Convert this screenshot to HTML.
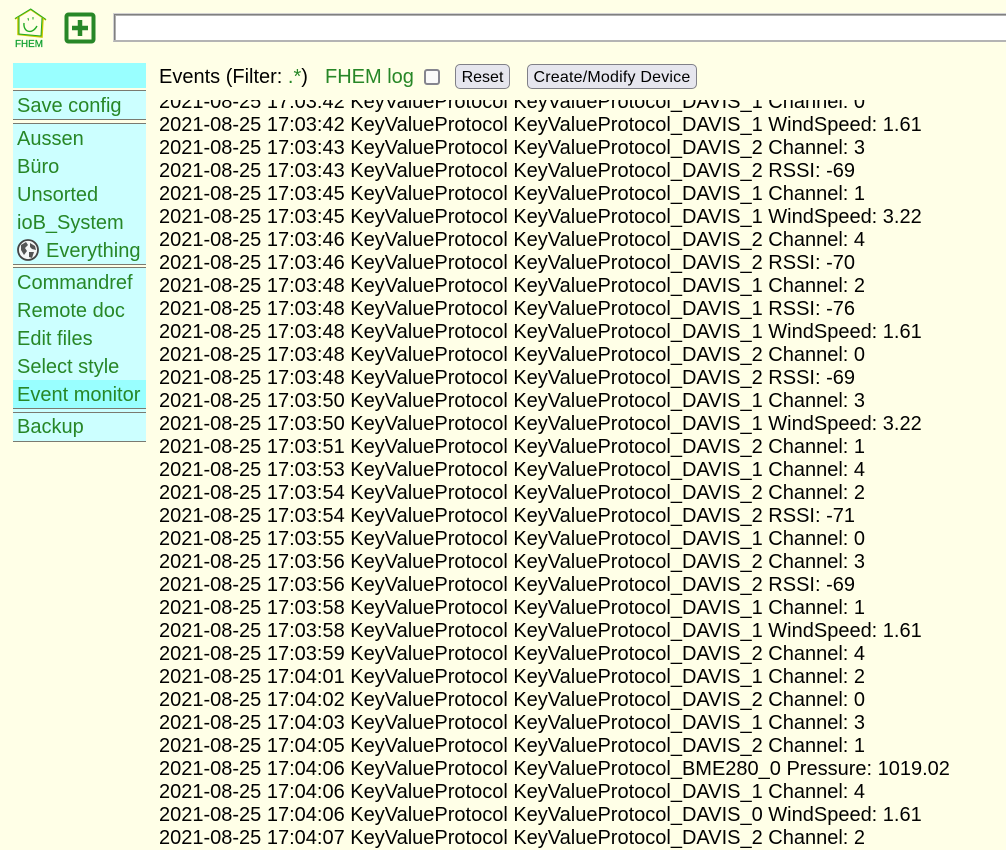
<!DOCTYPE html>
<html><head><meta charset="utf-8"><style>
html,body{margin:0;padding:0;width:1006px;height:850px;overflow:hidden;background:#FFFFE7;font-family:"Liberation Sans",sans-serif;font-size:20px;color:#000}
.a{position:absolute}
#q{left:113px;top:13px;width:900px;height:29px;box-sizing:border-box;background:#fff;border:1px solid #d2d2d2;border-bottom:2px solid #b4b4b4;box-shadow:inset 1px 1px 0 #808080,inset 2px 2px 0 #b0b0b0}
.m{position:absolute;left:13px;width:133px;background:#CCFFFF;color:#278727;white-space:nowrap;overflow:hidden}
.r{position:absolute;left:4px;line-height:23px;height:23px}
.hr{position:absolute;left:13px;width:133px;height:1px;background:#7a7a70}
.hl{position:absolute;left:13px;width:133px;height:28px;background:#99FFFF}
.btn{position:absolute;top:64px;height:25px;box-sizing:border-box;border:1px solid #808088;border-radius:5px;background:#E6E6EE;font-size:16px;line-height:25px;text-align:center;color:#000;white-space:nowrap}
#log{left:159px;top:100px;width:840px;height:750px;overflow:hidden;line-height:23px;white-space:nowrap}
#log div{height:23px;margin:0}
#log #in{margin-top:-9px;height:auto}
</style></head><body>
<svg class="a" style="left:13px;top:8px" width="36" height="42" viewBox="0 0 36 42">
<path d="M2 11 L17.700 1.500 L33 12" fill="none" stroke="#c8c800" stroke-width="1.500"/>
<path d="M2 10.500 L17.700 1 L33 11.500" fill="none" stroke="#22aa22" stroke-width="1"/>
<path d="M5 9 L5 26.500 L29 29 L30 10" fill="none" stroke="#c8c800" stroke-width="1.500"/>
<path d="M6 9 L6 26 L28 28 L29 10" fill="none" stroke="#22aa22" stroke-width="1"/>
<path d="M11 15 C10 24 19 27 24 18" fill="none" stroke="#22aa22" stroke-width="1.400"/>
<path d="M15 10 L15.500 12.500 M20 9 L20 11.500" stroke="#22aa22" stroke-width="1"/>
<text x="2" y="39" font-family="Liberation Sans" font-size="10.500" fill="#10a030" stroke="#10a030" stroke-width=".25" textLength="28" lengthAdjust="spacingAndGlyphs">FHEM</text>
</svg>
<svg class="a" style="left:64px;top:12px" width="33" height="33" viewBox="0 0 33 33">
<rect x="2.500" y="2.500" width="27" height="27" rx="2" fill="none" stroke="#278727" stroke-width="4"/>
<path d="M16 8 V24 M8 16 H24" stroke="#278727" stroke-width="4.500"/>
</svg>
<div id="q" class="a"></div>

<div class="a" style="left:13px;top:63px;width:133px;height:25px;background:#99FFFF"></div>
<div class="hr" style="top:90px"></div>
<div class="m" style="top:91px;height:28px"><span class="r" style="top:4px">Save config</span></div>
<div class="hr" style="top:119px"></div>
<div class="hr" style="top:123px"></div>
<div class="m" style="top:124px;height:140px">
<span class="r" style="top:4px">Aussen</span>
<span class="r" style="top:32px">Büro</span>
<span class="r" style="top:60px">Unsorted</span>
<span class="r" style="top:88px">ioB_System</span>
<span class="r" style="top:116px;left:33px">Everything</span>
</div>
<svg class="a" style="left:17px;top:239px" width="22" height="22" viewBox="0 0 22 22">
<circle cx="11" cy="11" r="10" fill="#f6f6f6" stroke="#444" stroke-width="1.800"/>
<path d="M4 6 L9 3 L11 6 L8 9 L10 12 L7 16 L4 11Z M13 4 L18 7 L19 11 L15 10 L13 8Z M12 13 L17 13 L15 19 L12 18Z" fill="#555"/>
</svg>
<div class="hr" style="top:264px"></div>
<div class="hr" style="top:267px"></div>
<div class="m" style="top:268px;height:144px">
<span class="r" style="top:4px">Commandref</span>
<span class="r" style="top:32px">Remote doc</span>
<span class="r" style="top:60px">Edit files</span>
<span class="r" style="top:88px">Select style</span>
</div>
<div class="hl" style="top:380px"></div>
<div class="a" style="left:17px;top:384px;line-height:23px;color:#278727">Event monitor</div>
<div class="hr" style="top:408px"></div>
<div class="hr" style="top:412px"></div>
<div class="m" style="top:413px;height:28px"><span class="r" style="top:3px">Backup</span></div>
<div class="hr" style="top:441px"></div>

<div class="a" style="left:159px;top:66px;line-height:23px;white-space:nowrap">Events (Filter: <span style="color:#278727">.*</span>)</div>
<div class="a" style="left:325px;top:66px;line-height:23px;color:#278727">FHEM log</div>
<div class="a" style="left:424px;top:69px;width:16px;height:16px;box-sizing:border-box;background:#fafafa;border:2px solid #85858f;border-radius:3px"></div>
<div class="btn" style="left:455px;width:55px">Reset</div>
<div class="btn" style="left:527px;width:170px;letter-spacing:.2px">Create/Modify Device</div>

<div id="log" class="a"><div id="in">
<div>2021-08-25 17:03:42 KeyValueProtocol KeyValueProtocol_DAVIS_1 Channel: 0</div>
<div>2021-08-25 17:03:42 KeyValueProtocol KeyValueProtocol_DAVIS_1 WindSpeed: 1.61</div>
<div>2021-08-25 17:03:43 KeyValueProtocol KeyValueProtocol_DAVIS_2 Channel: 3</div>
<div>2021-08-25 17:03:43 KeyValueProtocol KeyValueProtocol_DAVIS_2 RSSI: -69</div>
<div>2021-08-25 17:03:45 KeyValueProtocol KeyValueProtocol_DAVIS_1 Channel: 1</div>
<div>2021-08-25 17:03:45 KeyValueProtocol KeyValueProtocol_DAVIS_1 WindSpeed: 3.22</div>
<div>2021-08-25 17:03:46 KeyValueProtocol KeyValueProtocol_DAVIS_2 Channel: 4</div>
<div>2021-08-25 17:03:46 KeyValueProtocol KeyValueProtocol_DAVIS_2 RSSI: -70</div>
<div>2021-08-25 17:03:48 KeyValueProtocol KeyValueProtocol_DAVIS_1 Channel: 2</div>
<div>2021-08-25 17:03:48 KeyValueProtocol KeyValueProtocol_DAVIS_1 RSSI: -76</div>
<div>2021-08-25 17:03:48 KeyValueProtocol KeyValueProtocol_DAVIS_1 WindSpeed: 1.61</div>
<div>2021-08-25 17:03:48 KeyValueProtocol KeyValueProtocol_DAVIS_2 Channel: 0</div>
<div>2021-08-25 17:03:48 KeyValueProtocol KeyValueProtocol_DAVIS_2 RSSI: -69</div>
<div>2021-08-25 17:03:50 KeyValueProtocol KeyValueProtocol_DAVIS_1 Channel: 3</div>
<div>2021-08-25 17:03:50 KeyValueProtocol KeyValueProtocol_DAVIS_1 WindSpeed: 3.22</div>
<div>2021-08-25 17:03:51 KeyValueProtocol KeyValueProtocol_DAVIS_2 Channel: 1</div>
<div>2021-08-25 17:03:53 KeyValueProtocol KeyValueProtocol_DAVIS_1 Channel: 4</div>
<div>2021-08-25 17:03:54 KeyValueProtocol KeyValueProtocol_DAVIS_2 Channel: 2</div>
<div>2021-08-25 17:03:54 KeyValueProtocol KeyValueProtocol_DAVIS_2 RSSI: -71</div>
<div>2021-08-25 17:03:55 KeyValueProtocol KeyValueProtocol_DAVIS_1 Channel: 0</div>
<div>2021-08-25 17:03:56 KeyValueProtocol KeyValueProtocol_DAVIS_2 Channel: 3</div>
<div>2021-08-25 17:03:56 KeyValueProtocol KeyValueProtocol_DAVIS_2 RSSI: -69</div>
<div>2021-08-25 17:03:58 KeyValueProtocol KeyValueProtocol_DAVIS_1 Channel: 1</div>
<div>2021-08-25 17:03:58 KeyValueProtocol KeyValueProtocol_DAVIS_1 WindSpeed: 1.61</div>
<div>2021-08-25 17:03:59 KeyValueProtocol KeyValueProtocol_DAVIS_2 Channel: 4</div>
<div>2021-08-25 17:04:01 KeyValueProtocol KeyValueProtocol_DAVIS_1 Channel: 2</div>
<div>2021-08-25 17:04:02 KeyValueProtocol KeyValueProtocol_DAVIS_2 Channel: 0</div>
<div>2021-08-25 17:04:03 KeyValueProtocol KeyValueProtocol_DAVIS_1 Channel: 3</div>
<div>2021-08-25 17:04:05 KeyValueProtocol KeyValueProtocol_DAVIS_2 Channel: 1</div>
<div>2021-08-25 17:04:06 KeyValueProtocol KeyValueProtocol_BME280_0 Pressure: 1019.02</div>
<div>2021-08-25 17:04:06 KeyValueProtocol KeyValueProtocol_DAVIS_1 Channel: 4</div>
<div>2021-08-25 17:04:06 KeyValueProtocol KeyValueProtocol_DAVIS_0 WindSpeed: 1.61</div>
<div>2021-08-25 17:04:07 KeyValueProtocol KeyValueProtocol_DAVIS_2 Channel: 2</div>
</div></div>
</body></html>
